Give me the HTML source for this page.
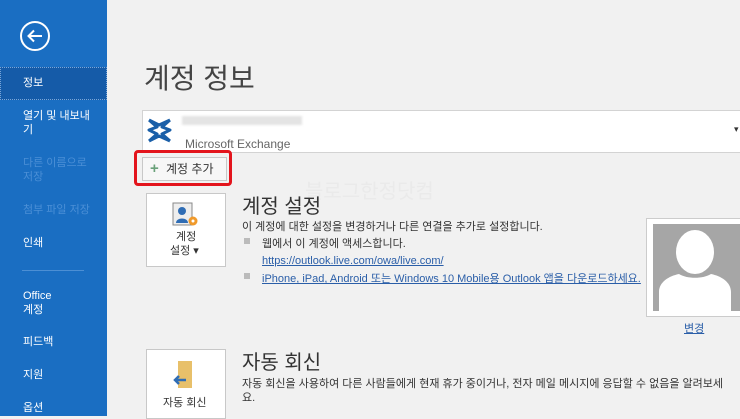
<!DOCTYPE html>
<html><head><meta charset="utf-8"><style>
*{margin:0;padding:0;box-sizing:border-box}
body{width:740px;height:416px;overflow:hidden;background:#f1f1f1;font-family:"Liberation Sans","Noto Sans CJK KR",sans-serif;position:relative;color:#444}
.sb{position:absolute;left:0;top:0;width:107px;height:416px;background:#1a6ec2}
.sb div{position:absolute;left:23px;color:#fff;font-size:11px;line-height:14px}
.sb .dim{color:#4b8fd6}
.act{position:absolute;left:0;top:67px;width:107px;height:33px;background:#155ba8;border:1px dotted #7aa6d8}
.a{position:absolute}
.t{position:absolute;white-space:nowrap;line-height:1;margin-top:3px}
a{color:#2a5ea8;text-decoration:underline}
</style></head><body>
<div class="sb">
<svg class="a" style="left:19px;top:20px" width="32" height="32" viewBox="0 0 32 32"><circle cx="16" cy="16" r="14" fill="none" stroke="#fff" stroke-width="2"/><path d="M23 16H10M15 10.5L9.5 16 15 21.5" fill="none" stroke="#fff" stroke-width="2"/></svg>
<span class="act"></span>
<div style="top:76px">정보</div>
<div style="top:109px">열기 및 내보내<br>기</div>
<div class="dim" style="top:156px">다른 이름으로<br>저장</div>
<div class="dim" style="top:203px">첨부 파일 저장</div>
<div style="top:236px">인쇄</div>
<span class="a" style="left:22px;top:270px;width:62px;height:1px;background:#4c8fd4"></span>
<div style="top:289px">Office<br>계정</div>
<div style="top:335px">피드백</div>
<div style="top:368px">지원</div>
<div style="top:401px">옵션</div>
</div>
<div class="t" style="left:144px;top:62px;font-size:28px;color:#444">계정 정보</div>
<div class="a" style="left:142px;top:110px;width:600px;height:43px;background:#fff;border-top:1px solid #d3d3d3;border-bottom:1px solid #d3d3d3;border-left:1px solid #d3d3d3"></div>
<svg class="a" style="left:146px;top:117px" width="27" height="27" viewBox="0 0 27 27"><path d="M3 3L11 10 3 13 11 17 3 24M24 3L16 10 24 13 16 17 24 24M3 3L13 8 24 3M3 24L13 19 24 24" fill="none" stroke="#1a5fa8" stroke-width="3" stroke-linejoin="round"/></svg>
<div class="a" style="left:182px;top:116px;width:120px;height:9px;background:#e4e4e4;filter:blur(1px)"></div>
<div class="t" style="left:185px;top:135px;font-size:12px;color:#666">Microsoft Exchange</div>
<div class="t" style="left:734px;top:122px;font-size:9px;color:#333">▾</div>
<div class="a" style="left:134px;top:150px;width:98px;height:36px;border:3px solid #e3141c;border-radius:4px"></div>
<div class="a" style="left:142px;top:157px;width:85px;height:24px;background:#f7f7f7;border:1px solid #c8c8c8"></div>
<div class="t" style="left:150px;top:158px;font-size:15px;color:#6aa17a;font-weight:bold">+</div>
<div class="t" style="left:166px;top:160px;font-size:12px;color:#333">계정 추가</div>
<div class="t" style="left:305px;top:179px;font-size:20px;color:#eaeaea">블로그한정닷컴</div>
<div class="a" style="left:146px;top:193px;width:80px;height:74px;background:#fff;border:1px solid #c8c8c8"></div>
<svg class="a" style="left:172px;top:202px" width="28" height="26" viewBox="0 0 28 26"><rect x="1" y="1" width="19" height="22" fill="#eee" stroke="#888"/><circle cx="10" cy="9" r="4" fill="#2f6db5"/><path d="M4 21c0-6 12-6 12 0z" fill="#2f6db5"/><circle cx="21" cy="19" r="4.5" fill="#f09a2b"/><circle cx="21" cy="19" r="1.5" fill="#fff"/></svg>
<div class="t" style="left:176px;top:229px;font-size:11px;color:#333">계정</div>
<div class="t" style="left:170px;top:243px;font-size:11px;color:#333">설정 ▾</div>
<div class="t" style="left:242px;top:194px;font-size:20px;color:#333">계정 설정</div>
<div class="t" style="left:242px;top:219px;font-size:11px;color:#333">이 계정에 대한 설정을 변경하거나 다른 연결을 추가로 설정합니다.</div>
<span class="a" style="left:244px;top:238px;width:6px;height:6px;background:#bbb"></span>
<div class="t" style="left:262px;top:236px;font-size:11px;color:#333">웹에서 이 계정에 액세스합니다.</div>
<div class="t" style="left:262px;top:253px;font-size:11px"><a>https://outlook.live.com/owa/live.com/</a></div>
<span class="a" style="left:244px;top:273px;width:6px;height:6px;background:#bbb"></span>
<div class="t" style="left:262px;top:271px;font-size:11px"><a>iPhone, iPad, Android 또는 Windows 10 Mobile용 Outlook 앱을 다운로드하세요.</a></div>
<div class="a" style="left:646px;top:218px;width:100px;height:99px;background:#fff;border:1px solid #ccc"></div>
<svg class="a" style="left:653px;top:224px" width="90" height="87" viewBox="0 0 90 87"><rect width="90" height="87" fill="#a6a6a6"/><ellipse cx="42" cy="28" rx="19" ry="22" fill="#fff"/><path d="M6 87V68c0-10 10-16 20-18 8 5 24 5 32 0 10 2 20 8 20 18v19z" fill="#fff"/></svg>
<div class="t" style="left:684px;top:321px;font-size:11px"><a>변경</a></div>
<div class="a" style="left:146px;top:349px;width:80px;height:70px;background:#fff;border:1px solid #c8c8c8"></div>
<svg class="a" style="left:172px;top:360px" width="24" height="30" viewBox="0 0 24 30"><rect x="6" y="1" width="14" height="27" fill="#e8c06a"/><path d="M14 20H3M7 16L3 20 7 24" fill="none" stroke="#2f6db5" stroke-width="2.5"/></svg>
<div class="t" style="left:163px;top:395px;font-size:11px;color:#333">자동 회신</div>
<div class="t" style="left:242px;top:350px;font-size:20px;color:#333">자동 회신</div>
<div class="t" style="left:242px;top:376px;font-size:11px;color:#333">자동 회신을 사용하여 다른 사람들에게 현재 휴가 중이거나, 전자 메일 메시지에 응답할 수 없음을 알려보세</div>
<div class="t" style="left:242px;top:390px;font-size:11px;color:#333">요.</div>
</body></html>
